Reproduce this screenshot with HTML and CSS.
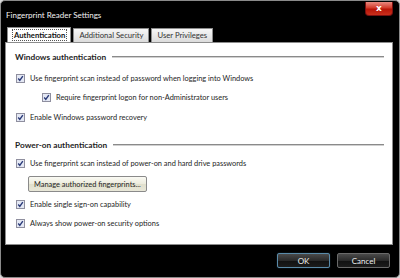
FILE: index.html
```html
<!DOCTYPE html>
<html lang="en">
<head>
  <meta charset="UTF-8" />
  <title>Fingerprint Reader Settings</title>
  <link rel="stylesheet" href="styles.css">
</head>
<body>
  <div class="window">
    <div class="titlebar">
      <span class="title">Fingerprint Reader Settings</span>
      <button class="close">x</button>
    </div>

    <div class="tabs">
      <div class="tab active"><span class="focus">Authentication</span></div>
      <div class="tab">Additional Security</div>
      <div class="tab">User Privileges</div>
    </div>

    <div class="panel">
      <div class="section-head first"><span>Windows authentication</span><div class="rule"></div></div>
      <label class="check-row m8">
        <svg class="box" width="9" height="9" viewBox="0 0 9 9"><rect x="0.5" y="0.5" width="8" height="8" fill="#e4e8f4" stroke="#8f8f9f"/><path d="M2.2 4.6 L3.8 6.3 L6.8 2.2" fill="none" stroke="#2a3a78" stroke-width="1.4"/></svg>
        Use fingerprint scan instead of password when logging into Windows
      </label>
      <label class="check-row m7 nested">
        <svg class="box" width="9" height="9" viewBox="0 0 9 9"><rect x="0.5" y="0.5" width="8" height="8" fill="#e4e8f4" stroke="#8f8f9f"/><path d="M2.2 4.6 L3.8 6.3 L6.8 2.2" fill="none" stroke="#2a3a78" stroke-width="1.4"/></svg>
        Require fingerprint logon for non-Administrator users
      </label>
      <label class="check-row m8">
        <svg class="box" width="9" height="9" viewBox="0 0 9 9"><rect x="0.5" y="0.5" width="8" height="8" fill="#e4e8f4" stroke="#8f8f9f"/><path d="M2.2 4.6 L3.8 6.3 L6.8 2.2" fill="none" stroke="#2a3a78" stroke-width="1.4"/></svg>
        Enable Windows password recovery
      </label>

      <div class="section-head second"><span>Power-on authentication</span><div class="rule"></div></div>
      <label class="check-row m5">
        <svg class="box" width="9" height="9" viewBox="0 0 9 9"><rect x="0.5" y="0.5" width="8" height="8" fill="#e4e8f4" stroke="#8f8f9f"/><path d="M2.2 4.6 L3.8 6.3 L6.8 2.2" fill="none" stroke="#2a3a78" stroke-width="1.4"/></svg>
        Use fingerprint scan instead of power-on and hard drive passwords
      </label>
      <button class="manage">Manage authorized fingerprints...</button>
      <label class="check-row m6">
        <svg class="box" width="9" height="9" viewBox="0 0 9 9"><rect x="0.5" y="0.5" width="8" height="8" fill="#e4e8f4" stroke="#8f8f9f"/><path d="M2.2 4.6 L3.8 6.3 L6.8 2.2" fill="none" stroke="#2a3a78" stroke-width="1.4"/></svg>
        Enable single sign-on capability
      </label>
      <label class="check-row m7">
        <svg class="box" width="9" height="9" viewBox="0 0 9 9"><rect x="0.5" y="0.5" width="8" height="8" fill="#e4e8f4" stroke="#8f8f9f"/><path d="M2.2 4.6 L3.8 6.3 L6.8 2.2" fill="none" stroke="#2a3a78" stroke-width="1.4"/></svg>
        Always show power-on security options
      </label>
    </div>

    <div class="footer">
      <button class="btn default">OK</button>
      <button class="btn">Cancel</button>
    </div>
  </div>
</body>
</html>
```

FILE: styles.css
```css
body, html {
  margin: 0;
  padding: 0;
  background: #d9d9d9;
  font-family: Lato, 'Open Sans', sans-serif;
  overflow: hidden;
}
.window {
  width: 398px;
  height: 276px;
  background: #000;
  border: 1px solid #8a8a8a;
  border-radius: 5px;
  display: flex;
  flex-direction: column;
}

.titlebar {
  height: 26px;
  display: flex;
  justify-content: space-between;
  align-items: flex-start;
}
.title {
  color: #f2f2f2;
  font-size: 8px;
  margin: 9px 0 0 5px;
}
.close {
  width: 28px;
  height: 14px;
  margin: 1px 6px 0 0;
  padding: 0;
  border: 1px solid #7a1010;
  border-top: none;
  border-radius: 0 0 4px 4px;
  background: linear-gradient(#e88a80, #d23a2a 45%, #b81508 55%, #c8301c);
  color: #fff;
  font-family: 'DejaVu Sans', sans-serif;
  font-weight: bold;
  font-size: 9px;
  line-height: 11px;
}

.tabs {
  display: flex;
  margin-left: 6px;
  height: 15px;
  align-items: flex-end;
}
.tab {
  height: 13px;
  padding: 0 5px;
  margin-right: 2px;
  border: 1px solid #8c8c8c;
  border-bottom: none;
  background: linear-gradient(#f6f6f6, #dcdcdc);
  color: #333;
  font-size: 7.7px;
  line-height: 13px;
}
.tab.active {
  height: 15px;
  padding: 0 3px 0 4px;
  margin-bottom: -1px;
  background: #fff;
  color: #111;
  font-weight: bold;
  line-height: 15px;
}
.focus {
  border: 1px dotted #555;
  padding: 0 1px;
}

.panel {
  height: 201px;
  margin: 0 6px 0 4px;
  padding: 0 8px 0 9px;
  background: #fff;
  border: 1px solid #8c8c8c;
  color: #1e1e1e;
  font-size: 7.4px;
}
.section-head {
  display: flex;
  align-items: center;
  gap: 6px;
  height: 14px;
  font-weight: bold;
  font-size: 8.3px;
}
.section-head.first { margin-top: 7px; }
.section-head.second { margin-top: 15px; }
.rule {
  flex: 1;
  border-top: 1px solid #8a8a8a;
  border-bottom: 1px solid #d0d0d0;
}

.check-row {
  display: flex;
  align-items: center;
  gap: 5px;
  height: 12px;
  margin-left: 1px;
}
.check-row.nested { margin-left: 27px; }
.m5 { margin-top: 5px; }
.m6 { margin-top: 6px; }
.m7 { margin-top: 7px; }
.m8 { margin-top: 8px; }

.manage {
  display: block;
  height: 16px;
  margin: 7px 0 0 13px;
  padding: 0 5px;
  border: 1px solid #8a8a8a;
  border-radius: 2px;
  background: linear-gradient(#fafaf4, #ecebdc 50%, #e0dfcc 51%, #e8e7d8);
  color: #1e1e1e;
  font-family: inherit;
  font-size: 7.4px;
}

.footer {
  display: flex;
  justify-content: flex-end;
  gap: 7px;
  padding: 8px 9px 0 0;
}
.btn {
  width: 53px;
  height: 15px;
  padding: 0;
  border: 1px solid #6a6a6a;
  border-radius: 2px;
  background: linear-gradient(#4a4a4a, #2a2a2a 50%, #111 51%, #1c1c1c);
  color: #f0f0f0;
  font-family: inherit;
  font-size: 8px;
}
.btn.default {
  border-color: #5a8aa8;
  box-shadow: 0 0 1px #3a6a88;
}
```
